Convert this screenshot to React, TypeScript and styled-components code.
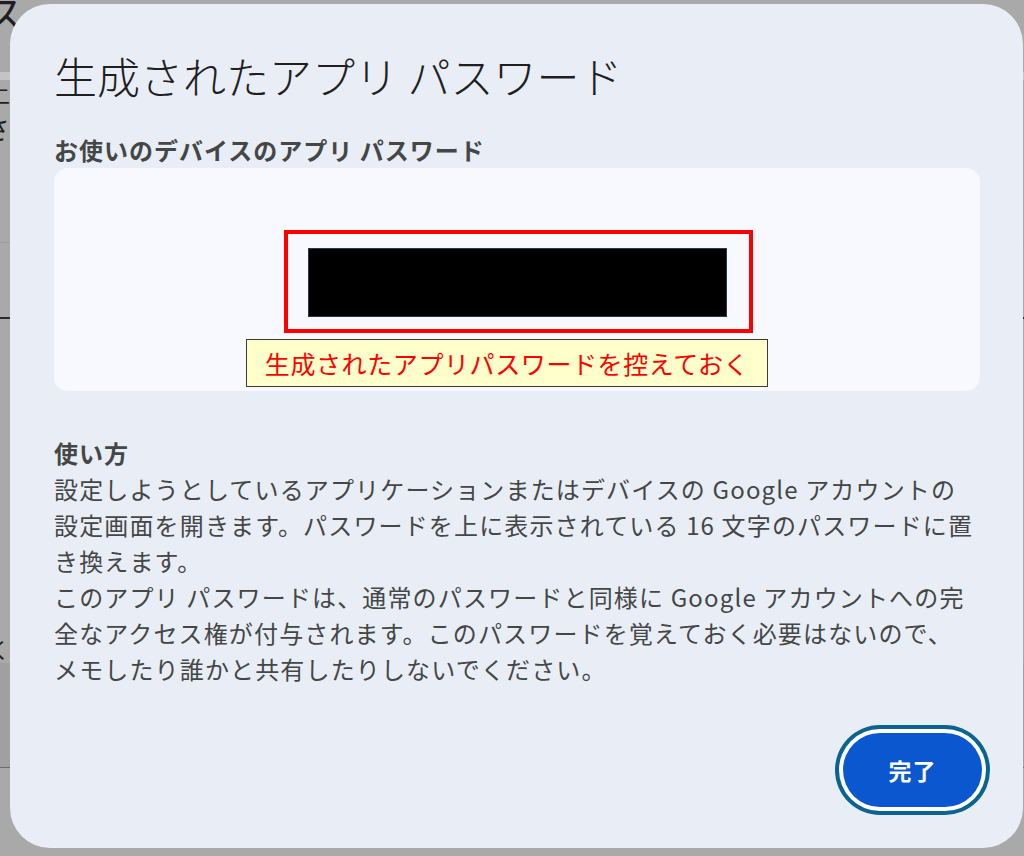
import styled, { createGlobalStyle } from "styled-components";

const GlobalStyle = createGlobalStyle`
  html, body {
    margin: 0;
    padding: 0;
    height: 100%;
    overflow: hidden;
  }
  body {
    background: #a9a9a9;
    font-family: "Noto Sans CJK JP", "Noto Sans", sans-serif;
  }
`;

const Backdrop = styled.div`
  display: flex;
  flex-direction: column;
  height: 100vh;
  overflow: hidden;
  color: #1f1f1f;
`;

const BackGlyph = styled.span<{ $top: number; $size: number; $shift: number }>`
  display: block;
  margin-top: ${(p) => p.$top}px;
  margin-left: ${(p) => p.$shift}px;
  font-size: ${(p) => p.$size}px;
  line-height: 1;
`;

const BackRule = styled.div<{ $top: number; $color: string; $height: number }>`
  margin-top: ${(p) => p.$top}px;
  height: ${(p) => p.$height}px;
  background: ${(p) => p.$color};
`;

const Overlay = styled.div`
  position: fixed;
  inset: 0;
  padding: 4px 1px 8px 10px;
  display: flex;
`;

const Dialog = styled.section`
  flex: 1;
  display: flex;
  flex-direction: column;
  background: #e9edf6;
  border-radius: 40px;
  padding: 43px 41px 41px 44px;
`;

const Title = styled.h1`
  margin: 0;
  font-size: 43px;
  line-height: 56px;
  font-weight: 300;
  color: #1f1f1f;
`;

const Subtitle = styled.h2`
  margin: 32px 0 3px;
  font-size: 24px;
  line-height: 30px;
  letter-spacing: 1px;
  font-weight: 700;
  color: #444746;
`;

const PasswordPanel = styled.div`
  margin-right: 2px;
  height: 223px;
  box-sizing: border-box;
  background: #f8f9fe;
  border-radius: 14px;
  padding-top: 62px;
  display: flex;
  flex-direction: column;
  align-items: center;
`;

const Highlight = styled.div`
  width: 469px;
  height: 103px;
  box-sizing: border-box;
  border: 4px solid #ff0000;
  padding: 14px 22px 12px 20px;
  margin-left: 2px;
`;

const Masked = styled.div`
  height: 100%;
  background: #000;
  border: 1.5px solid #24394a;
  box-sizing: border-box;
`;

const Callout = styled.div`
  margin-top: 6px;
  margin-right: 20px;
  width: 522px;
  height: 48px;
  box-sizing: border-box;
  background: #ffffcc;
  border: 1px solid #3a3a3a;
  color: #ff0000;
  font-size: 25px;
  line-height: 46px;
  letter-spacing: 0.6px;
  text-align: center;
`;

const SectionHeading = styled.h3`
  margin: 44px 0 0;
  font-size: 24px;
  line-height: 36px;
  letter-spacing: 1px;
  font-weight: 700;
  color: #444746;
`;

const Body = styled.p`
  margin: 0;
  font-size: 24px;
  line-height: 36px;
  letter-spacing: 1.15px;
  color: #444746;
  white-space: nowrap;
`;

const Actions = styled.div`
  margin-top: auto;
  display: flex;
  justify-content: flex-end;
`;

const DoneButton = styled.button`
  width: 139px;
  height: 74px;
  border: none;
  border-radius: 999px;
  background: #0b57d0;
  color: #fff;
  font-family: inherit;
  font-size: 23px;
  font-weight: 700;
  letter-spacing: 1px;
  box-shadow: 0 0 0 4px #ffffff, 0 0 0 8px #0b6390;
  cursor: pointer;
`;

function App() {
  return (
    <>
      <GlobalStyle />
      <Backdrop aria-hidden="true">
        <BackGlyph $top={-8} $size={40} $shift={-16}>
          ス
        </BackGlyph>
        <BackRule $top={40} $color="#c4c4c4" $height={8} />
        <BackGlyph $top={6} $size={20} $shift={-10}>
          二
        </BackGlyph>
        <BackGlyph $top={8} $size={28} $shift={-18}>
          さ
        </BackGlyph>
        <BackRule $top={100} $color="#9c9c9c" $height={1} />
        <BackRule $top={74} $color="#2a2a2a" $height={2} />
        <BackGlyph $top={318} $size={22} $shift={-12}>
          く
        </BackGlyph>
        <BackRule $top={4} $color="#a0a0a0" $height={104} />
        <BackRule $top={0} $color="#6e6e6e" $height={1} />
      </Backdrop>
      <Overlay>
        <Dialog role="dialog" aria-label="生成されたアプリ パスワード">
          <Title>生成されたアプリ パスワード</Title>
          <Subtitle>お使いのデバイスのアプリ パスワード</Subtitle>
          <PasswordPanel>
            <Highlight>
              <Masked />
            </Highlight>
            <Callout>生成されたアプリパスワードを控えておく</Callout>
          </PasswordPanel>
          <SectionHeading>使い方</SectionHeading>
          <Body>
            設定しようとしているアプリケーションまたはデバイスの Google アカウントの
            <br />
            設定画面を開きます。パスワードを上に表示されている 16 文字のパスワードに置
            <br />
            き換えます。
            <br />
            このアプリ パスワードは、通常のパスワードと同様に Google アカウントへの完
            <br />
            全なアクセス権が付与されます。このパスワードを覚えておく必要はないので、
            <br />
            メモしたり誰かと共有したりしないでください。
          </Body>
          <Actions>
            <DoneButton>完了</DoneButton>
          </Actions>
        </Dialog>
      </Overlay>
    </>
  );
}

export default App;
